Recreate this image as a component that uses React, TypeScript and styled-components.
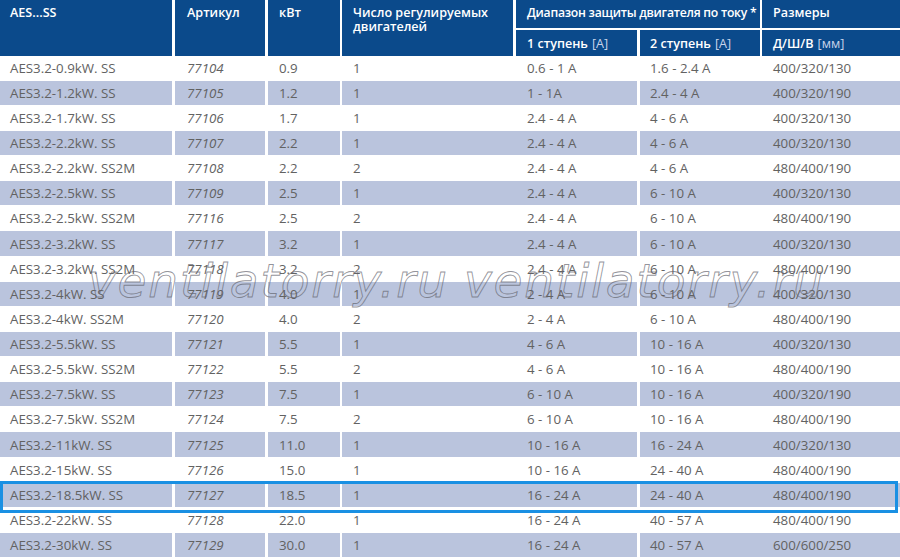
import React from "react";
import styled, { createGlobalStyle, css } from "styled-components";

const Global = createGlobalStyle`
  html, body { margin: 0; padding: 0; background: #fff; overflow: hidden; }
  body { font-family: "Open Sans", "Noto Sans", sans-serif; }
  * { box-sizing: border-box; }
`;

const HEADER_BG = "#0b4a8b";
const STRIPE_BG = "#bac4dd";
const TEXT = "#626262";
const COLS = "175px 93px 74px 174px 124px 122px 138px";

const Page = styled.div`
  position: relative;
  width: 900px;
  height: 560px;
  overflow: hidden;
`;

const Header = styled.div`
  display: grid;
  grid-template-columns: ${COLS};
  grid-template-rows: 30px 25.6px;
`;

const HeadCell = styled.div<{ $gap?: number; $span?: number; $rows?: number; $split?: boolean; $pad?: number; $center?: boolean; $tight?: boolean }>`
  background: ${HEADER_BG};
  color: #fff;
  font-weight: 600;
  font-size: ${(p) => (p.$tight ? "12.2px" : "12.6px")};
  letter-spacing: ${(p) => (p.$tight ? "-0.25px" : "0")};
  line-height: 14px;
  white-space: nowrap;
  overflow: hidden;
  padding: ${(p) => (p.$center ? "0" : "6px")} 0 0 ${(p) => p.$pad ?? 11}px;
  border-right: ${(p) => p.$gap ?? 0}px solid #fff;
  ${(p) => p.$span && css`grid-column: span ${p.$span};`}
  ${(p) => p.$rows && css`grid-row: span ${p.$rows};`}
  ${(p) => p.$split && css`border-bottom: 2px solid #fff;`}
  ${(p) => p.$center && css`display: flex; align-items: center; padding-top: 2px;`}
`;

const Unit = styled.span`
  font-weight: 400;
  color: #c9d4ea;
  margin-left: 4px;
`;

const Row = styled.div<{ $active?: boolean }>`
  position: relative;
  display: grid;
  grid-template-columns: ${COLS};
  height: 25.13px;
  border-bottom: 1px solid #fff;
  ${(p) =>
    p.$active &&
    css`
      z-index: 2;
      &::after {
        content: "";
        position: absolute;
        left: 0;
        right: 2px;
        top: -2px;
        height: 26px;
        border: 3.5px solid #1a90e3;
        pointer-events: none;
      }
    `}
`;

const Cell = styled.div<{ $gap?: number; $pad?: number; $italic?: boolean; $stripe: boolean }>`
  display: flex;
  align-items: center;
  padding-left: ${(p) => p.$pad ?? 11}px;
  background: ${(p) => (p.$stripe ? STRIPE_BG : "#fff")};
  border-right: ${(p) => p.$gap ?? 0}px solid #fff;
  color: ${TEXT};
  font-size: 13.3px;
  font-style: ${(p) => (p.$italic ? "italic" : "normal")};
  white-space: nowrap;
`;

const Watermark = styled.div<{ $left: number }>`
  position: absolute;
  z-index: 3;
  left: ${(p) => p.$left}px;
  top: 255px;
  font-family: "DejaVu Sans", sans-serif;
  font-style: oblique;
  font-size: 47px;
  line-height: 51px;
  letter-spacing: 1.8px;
  color: transparent;
  -webkit-text-stroke: 0.9px rgba(100, 100, 110, 0.7);
  pointer-events: none;
  white-space: nowrap;
`;

type R = [string, string, string, string, string, string, string];

const rows: R[] = [
  ["AES3.2-0.9kW. SS", "77104", "0.9", "1", "0.6 - 1 A", "1.6 - 2.4 A", "400/320/130"],
  ["AES3.2-1.2kW. SS", "77105", "1.2", "1", "1 - 1A", "2.4 - 4 A", "400/320/190"],
  ["AES3.2-1.7kW. SS", "77106", "1.7", "1", "2.4 - 4 A", "4 - 6 A", "400/320/130"],
  ["AES3.2-2.2kW. SS", "77107", "2.2", "1", "2.4 - 4 A", "4 - 6 A", "400/320/130"],
  ["AES3.2-2.2kW. SS2M", "77108", "2.2", "2", "2.4 - 4 A", "4 - 6 A", "480/400/190"],
  ["AES3.2-2.5kW. SS", "77109", "2.5", "1", "2.4 - 4 A", "6 - 10 A", "400/320/130"],
  ["AES3.2-2.5kW. SS2M", "77116", "2.5", "2", "2.4 - 4 A", "6 - 10 A", "480/400/190"],
  ["AES3.2-3.2kW. SS", "77117", "3.2", "1", "2.4 - 4 A", "6 - 10 A", "400/320/130"],
  ["AES3.2-3.2kW. SS2M", "77118", "3.2", "2", "2.4 - 4 A", "6 - 10 A", "480/400/190"],
  ["AES3.2-4kW. SS", "77119", "4.0", "1", "2 - 4 A", "6 - 10 A", "400/320/130"],
  ["AES3.2-4kW. SS2M", "77120", "4.0", "2", "2 - 4 A", "6 - 10 A", "480/400/190"],
  ["AES3.2-5.5kW. SS", "77121", "5.5", "1", "4 - 6 A", "10 - 16 A", "400/320/130"],
  ["AES3.2-5.5kW. SS2M", "77122", "5.5", "2", "4 - 6 A", "10 - 16 A", "480/400/190"],
  ["AES3.2-7.5kW. SS", "77123", "7.5", "1", "6 - 10 A", "10 - 16 A", "400/320/190"],
  ["AES3.2-7.5kW. SS2M", "77124", "7.5", "2", "6 - 10 A", "10 - 16 A", "480/400/190"],
  ["AES3.2-11kW. SS", "77125", "11.0", "1", "10 - 16 A", "16 - 24 A", "400/320/130"],
  ["AES3.2-15kW. SS", "77126", "15.0", "1", "10 - 16 A", "24 - 40 A", "480/400/190"],
  ["AES3.2-18.5kW. SS", "77127", "18.5", "1", "16 - 24 A", "24 - 40 A", "480/400/190"],
  ["AES3.2-22kW. SS", "77128", "22.0", "1", "16 - 24 A", "40 - 57 A", "480/400/190"],
  ["AES3.2-30kW. SS", "77129", "30.0", "1", "16 - 24 A", "40 - 57 A", "600/600/250"],
];

const cellGaps = [3, 3, 2, 0, 3, 0, 0];
const cellPads = [10, 12, 11, 11, 11, 10, 11];

export default function App() {
  return (
    <>
      <Global />
      <Page>
        <Header>
          <HeadCell $rows={2} $gap={3} $pad={10}>AES...SS</HeadCell>
          <HeadCell $rows={2} $gap={3} $pad={12}>Артикул</HeadCell>
          <HeadCell $rows={2} $gap={2}>кВт</HeadCell>
          <HeadCell $rows={2} $gap={3}>
            Число регулируемых
            <br />
            двигателей
          </HeadCell>
          <HeadCell $span={2} $gap={2} $split $tight>
            Диапазон защиты двигателя по току *
          </HeadCell>
          <HeadCell $split>Размеры</HeadCell>
          <HeadCell $gap={3} $center>
            1 ступень<Unit>[А]</Unit>
          </HeadCell>
          <HeadCell $gap={2} $center $pad={10}>
            2 ступень<Unit>[А]</Unit>
          </HeadCell>
          <HeadCell $center>
            Д/Ш/В<Unit>[мм]</Unit>
          </HeadCell>
        </Header>
        {rows.map((r, i) => {
          const stripe = i % 2 === 1;
          return (
            <Row key={r[1]} $active={r[1] === "77127"}>
              {r.map((v, j) => (
                <Cell key={j} $stripe={stripe} $gap={cellGaps[j]} $pad={cellPads[j]} $italic={j === 1}>
                  {v}
                </Cell>
              ))}
            </Row>
          );
        })}
        <Watermark $left={88}>ventilatorry.ru</Watermark>
        <Watermark $left={464}>ventilatorry.ru</Watermark>
      </Page>
    </>
  );
}
